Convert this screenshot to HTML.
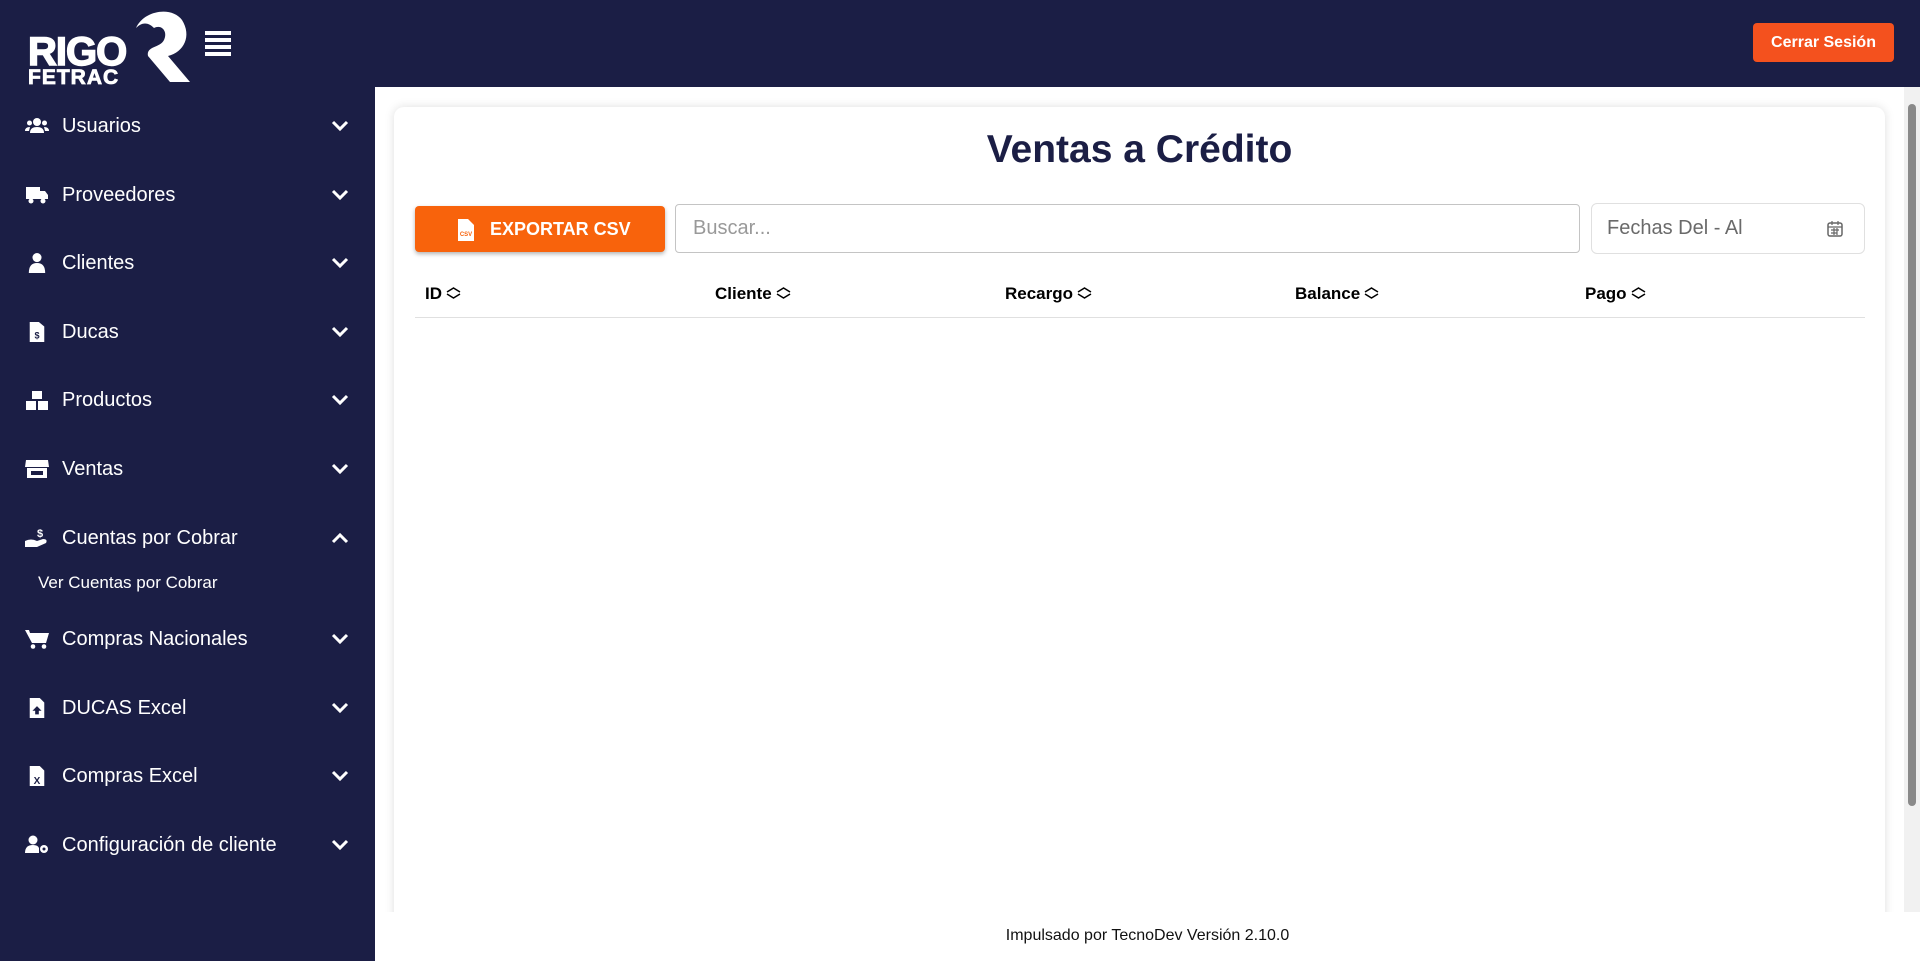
<!DOCTYPE html>
<html><head><meta charset="utf-8"><style>
*{box-sizing:border-box;margin:0;padding:0}
body{width:1920px;height:961px;overflow:hidden;background:#fff;font-family:"Liberation Sans",Arial,sans-serif;position:relative}
.top{position:absolute;left:0;top:0;width:1920px;height:87px;background:#1b1e45}
.side{position:absolute;left:0;top:87px;width:375px;height:874px;background:#1b1e45}
.logo{position:absolute;left:28px;top:4px;color:#fff;font-weight:900}
.btn-out{position:absolute;left:1753px;top:23px;width:141px;height:39px;background:#f4511e;color:#fff;border-radius:4px;font-size:16px;font-weight:bold;text-align:center;line-height:39px}
.ham{position:absolute;left:205px;top:31px;width:26px}
.ham div{height:4px;background:#fff;margin-bottom:3px}
.item{position:absolute;left:0;width:375px;height:40px;color:#fff;font-size:20px;line-height:40px}
.item .ic{position:absolute;left:25px;top:10px;width:24px;height:20px}
.item .t{position:absolute;left:62px}
.item .ch{position:absolute;left:330px;top:13px}
.sub{position:absolute;left:38px;top:573px;color:#fff;font-size:17px}
.main{position:absolute;left:375px;top:87px;width:1529px;height:825px;overflow:hidden}
.card{position:absolute;left:19px;top:20px;width:1491px;height:860px;background:#fff;border-radius:10px;box-shadow:0 0 10px rgba(0,0,0,.13)}
h1{position:absolute;left:394px;width:1491px;top:128px;text-align:center;font-size:39px;color:#1b1e45;font-weight:bold}
.exp{position:absolute;left:415px;top:206px;width:250px;height:46px;background:#f8630c;border-radius:4px;box-shadow:0 2px 4px rgba(0,0,0,.3);color:#fff;font-size:18px;font-weight:bold;line-height:46px}
.search{position:absolute;left:675px;top:204px;width:905px;height:49px;border:1px solid #c4c4c4;border-radius:4px;color:#999;font-size:20px;line-height:47px;padding-left:17px}
.date{position:absolute;left:1591px;top:203px;width:274px;height:51px;border:1px solid #e0e0e0;border-radius:6px;color:#6a6a6a;font-size:20px;line-height:49px;padding-left:15px}
.th{position:absolute;top:284px;font-size:17px;font-weight:bold;color:#000}
.th svg{vertical-align:-1px;margin-left:3px}
.line{position:absolute;left:415px;top:317px;width:1450px;height:1px;background:#e0e0e0}
.foot{position:absolute;left:375px;width:1545px;top:927px;text-align:center;font-size:16px;color:#111}
.sb{position:absolute;left:1904px;top:87px;width:16px;height:825px;background:#f1f1f1}
.thumb{position:absolute;left:1908px;top:104px;width:8px;height:702px;background:#8a8a8a;border-radius:4px}
</style></head><body>
<div class="top"></div>
<div class="side"></div>
<div class="logo">
<div style="position:absolute;left:0;top:26px;font-size:40px;letter-spacing:-1px;-webkit-text-stroke:1.5px #fff">RIGO</div>
<div style="position:absolute;left:0;top:62px;font-size:21px;letter-spacing:1px;-webkit-text-stroke:.8px #fff">FETRAC</div>
<svg style="position:absolute;left:94px;top:2px" width="72" height="76" viewBox="0 0 72 76"><path d="M14 22 C22 4 50 0 60 14 C70 30 62 46 46 50 L68 76 L48 76 L26 50 C24 40 38 42 42 34 C46 26 40 18 32 22 C26 16 20 16 14 22Z" fill="#fff"/></svg>
</div>
<div class="ham"><div></div><div></div><div></div><div></div></div>
<div class="btn-out">Cerrar Sesión</div>

<div class="item" style="top:106px"><svg class="ic" viewBox="0 0 24 20"><circle cx="12" cy="6" r="4" fill="#fff"/><circle cx="4.5" cy="7" r="2.5" fill="#fff"/><circle cx="19.5" cy="7" r="2.5" fill="#fff"/><path d="M5 17 Q5 11 12 11 Q19 11 19 17Z M0 15 Q0 11 5 11 L4 15Z M24 15 Q24 11 19 11 L20 15Z" fill="#fff"/></svg><span class="t">Usuarios</span><svg class="ch" width="20" height="14"><path d="M3 3 L10 10 L17 3" stroke="#fff" stroke-width="3" fill="none"/></svg></div>
<div class="item" style="top:175px"><svg class="ic" viewBox="0 0 24 20"><path d="M1 2h14v12H1z M15 6h5l3 4v4h-8z" fill="#fff"/><circle cx="6" cy="16" r="2.5" fill="#fff"/><circle cx="18" cy="16" r="2.5" fill="#fff"/></svg><span class="t">Proveedores</span><svg class="ch" width="20" height="14"><path d="M3 3 L10 10 L17 3" stroke="#fff" stroke-width="3" fill="none"/></svg></div>
<div class="item" style="top:243px"><svg class="ic" viewBox="0 0 24 22"><circle cx="12" cy="5" r="5" fill="#fff"/><path d="M3 22 Q3 11 12 11 Q21 11 21 22Z" fill="#fff"/></svg><span class="t">Clientes</span><svg class="ch" width="20" height="14"><path d="M3 3 L10 10 L17 3" stroke="#fff" stroke-width="3" fill="none"/></svg></div>
<div class="item" style="top:312px"><svg class="ic" viewBox="0 0 24 22"><path d="M4 0h10l6 5v17H4z" fill="#fff"/><text x="12" y="18" font-size="10" text-anchor="middle" fill="#1b1e45" font-weight="bold">$</text></svg><span class="t">Ducas</span><svg class="ch" width="20" height="14"><path d="M3 3 L10 10 L17 3" stroke="#fff" stroke-width="3" fill="none"/></svg></div>
<div class="item" style="top:380px"><svg class="ic" viewBox="0 0 24 20"><path d="M7 1h10v8H7z M1 11h10v9H1z M13 11h10v9H13z" fill="#fff"/></svg><span class="t">Productos</span><svg class="ch" width="20" height="14"><path d="M3 3 L10 10 L17 3" stroke="#fff" stroke-width="3" fill="none"/></svg></div>
<div class="item" style="top:449px"><svg class="ic" viewBox="0 0 24 20"><path d="M1 1h22l1 7H0z M2 9h20v10H2z" fill="#fff"/><path d="M6 12h12v4H6z" fill="#1b1e45"/></svg><span class="t">Ventas</span><svg class="ch" width="20" height="14"><path d="M3 3 L10 10 L17 3" stroke="#fff" stroke-width="3" fill="none"/></svg></div>
<div class="item" style="top:518px"><svg class="ic" viewBox="0 0 24 20"><text x="12" y="9" font-size="11" fill="#fff" font-weight="bold">$</text><path d="M0 13 Q6 10 12 13 L18 11 Q23 11 21 15 L12 19 L0 19Z" fill="#fff"/></svg><span class="t">Cuentas por Cobrar</span><svg class="ch" width="20" height="14"><path d="M3 11 L10 4 L17 11" stroke="#fff" stroke-width="3" fill="none"/></svg></div>
<div class="sub">Ver Cuentas por Cobrar</div>
<div class="item" style="top:619px"><svg class="ic" viewBox="0 0 24 20"><path d="M0 1h4l1 3h19l-3 10H7z" fill="#fff"/><circle cx="8" cy="17.5" r="2.3" fill="#fff"/><circle cx="19" cy="17.5" r="2.3" fill="#fff"/></svg><span class="t">Compras Nacionales</span><svg class="ch" width="20" height="14"><path d="M3 3 L10 10 L17 3" stroke="#fff" stroke-width="3" fill="none"/></svg></div>
<div class="item" style="top:688px"><svg class="ic" viewBox="0 0 24 22"><path d="M4 0h11l5 5v17H4z" fill="#fff"/><path d="M12 9l-5 5h3v4h4v-4h3z" fill="#1b1e45"/></svg><span class="t">DUCAS Excel</span><svg class="ch" width="20" height="14"><path d="M3 3 L10 10 L17 3" stroke="#fff" stroke-width="3" fill="none"/></svg></div>
<div class="item" style="top:756px"><svg class="ic" viewBox="0 0 24 22"><path d="M4 0h11l5 5v17H4z" fill="#fff"/><text x="12" y="20" font-size="11" text-anchor="middle" fill="#1b1e45" font-weight="bold">X</text></svg><span class="t">Compras Excel</span><svg class="ch" width="20" height="14"><path d="M3 3 L10 10 L17 3" stroke="#fff" stroke-width="3" fill="none"/></svg></div>
<div class="item" style="top:825px"><svg class="ic" viewBox="0 0 24 20"><circle cx="8" cy="5" r="4.5" fill="#fff"/><path d="M0 18 Q0 10 8 10 Q13 10 14 13 L14 18Z" fill="#fff"/><circle cx="19" cy="14" r="4" fill="#fff"/><circle cx="19" cy="14" r="1.5" fill="#1b1e45"/></svg><span class="t">Configuración de cliente</span><svg class="ch" width="20" height="14"><path d="M3 3 L10 10 L17 3" stroke="#fff" stroke-width="3" fill="none"/></svg></div>

<div class="main"><div class="card"></div></div>
<h1>Ventas a Crédito</h1>
<div class="exp"><svg style="position:absolute;left:43px;top:13px" width="16" height="22" viewBox="0 0 16 22"><path d="M0 0h10l6 6v16H0z" fill="#fff"/><text x="8" y="17" font-size="6" text-anchor="middle" fill="#f8630c" font-weight="bold">CSV</text></svg><span style="position:absolute;left:75px">EXPORTAR CSV</span></div>
<div class="search">Buscar...</div>
<div class="date">Fechas Del - Al<svg style="position:absolute;right:20px;top:16px" width="18" height="18" viewBox="0 0 18 18"><rect x="2" y="3" width="14" height="13" rx="2" fill="none" stroke="#666" stroke-width="1.5"/><path d="M2 7h14M6 1v4M12 1v4M5 10h8M5 13h6M8 8v7M11 8v7" stroke="#666" stroke-width="1.2"/></svg></div>
<div class="th" style="left:425px">ID<svg width="17" height="14" viewBox="0 0 17 14"><path d="M2 6 L8.5 2 L15 6 M2 8 L8.5 12 L15 8" stroke="#000" stroke-width="1.5" fill="none"/></svg></div>
<div class="th" style="left:715px">Cliente<svg width="17" height="14" viewBox="0 0 17 14"><path d="M2 6 L8.5 2 L15 6 M2 8 L8.5 12 L15 8" stroke="#000" stroke-width="1.5" fill="none"/></svg></div>
<div class="th" style="left:1005px">Recargo<svg width="17" height="14" viewBox="0 0 17 14"><path d="M2 6 L8.5 2 L15 6 M2 8 L8.5 12 L15 8" stroke="#000" stroke-width="1.5" fill="none"/></svg></div>
<div class="th" style="left:1295px">Balance<svg width="17" height="14" viewBox="0 0 17 14"><path d="M2 6 L8.5 2 L15 6 M2 8 L8.5 12 L15 8" stroke="#000" stroke-width="1.5" fill="none"/></svg></div>
<div class="th" style="left:1585px">Pago<svg width="17" height="14" viewBox="0 0 17 14"><path d="M2 6 L8.5 2 L15 6 M2 8 L8.5 12 L15 8" stroke="#000" stroke-width="1.5" fill="none"/></svg></div>
<div class="line"></div>
<div class="foot">Impulsado por TecnoDev Versión 2.10.0</div>
<div class="sb"></div><div class="thumb"></div>
</body></html>
